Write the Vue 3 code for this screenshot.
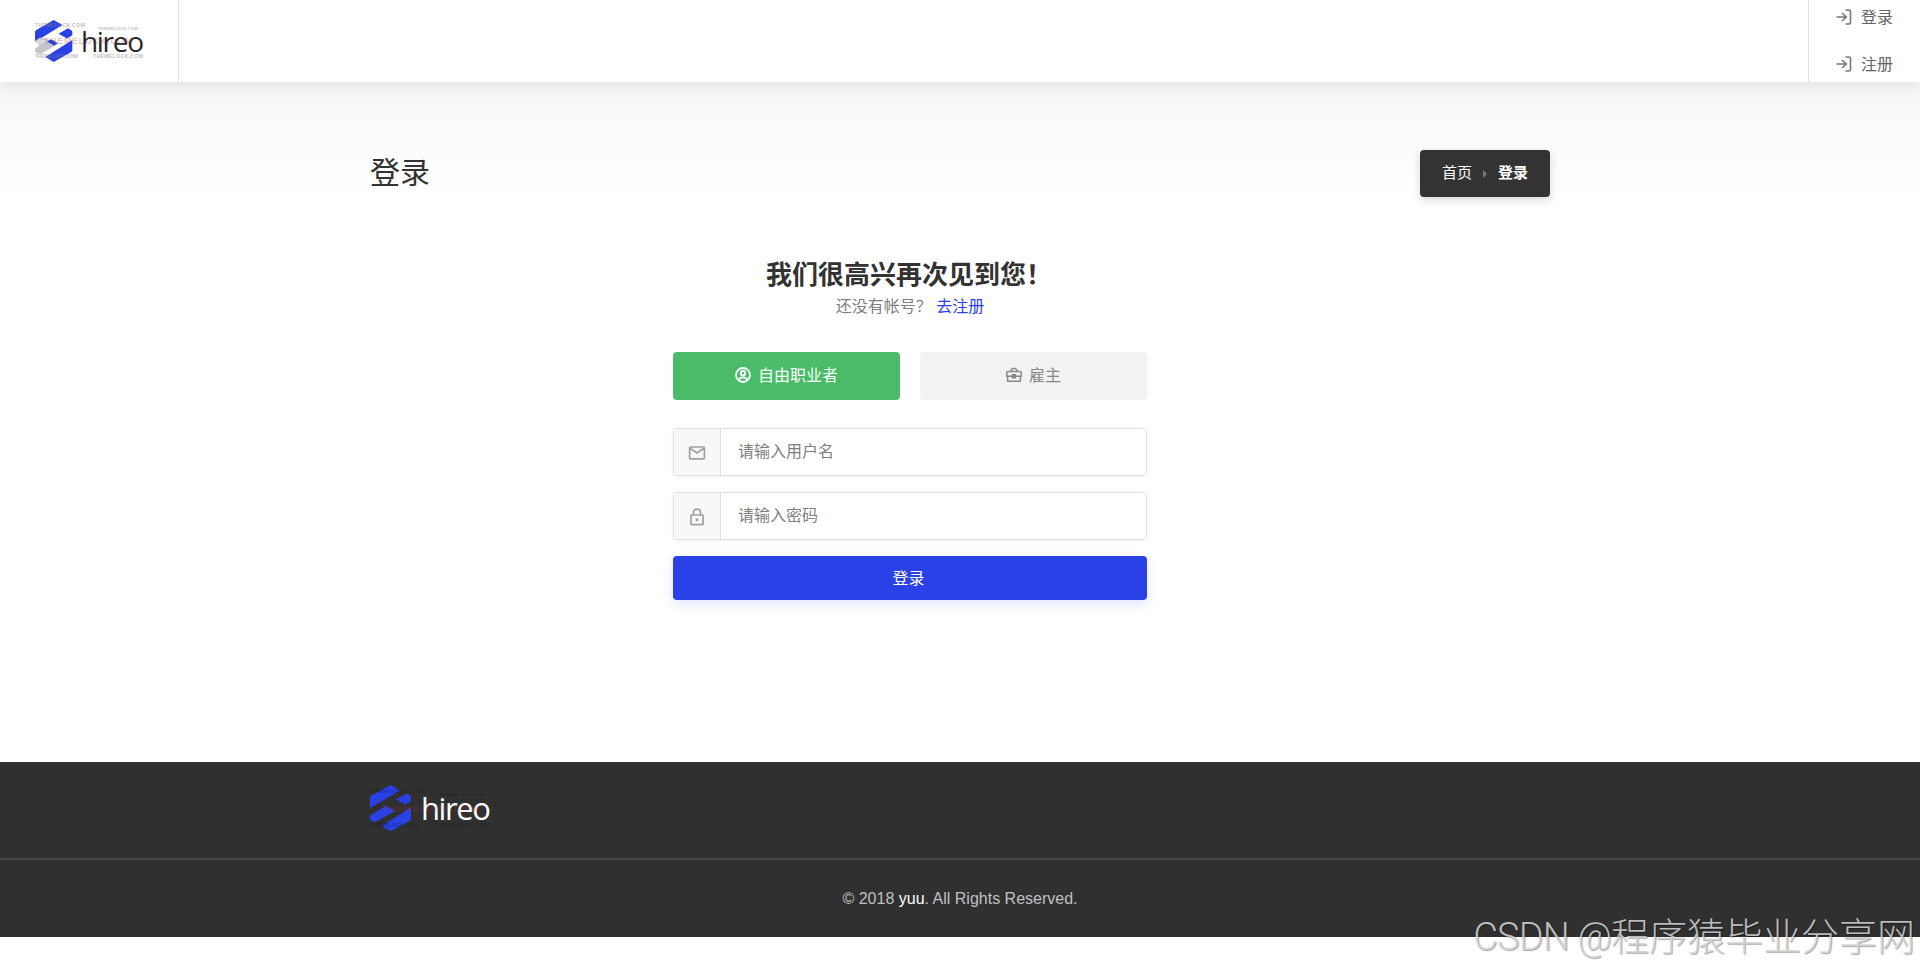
<template>
  <div class="page">
    <header class="header">
      <a class="header-logo" href="#">
        <svg class="logo-dark" viewBox="0 0 108 42">
          <g fill="#2a41e8">
            <path d="M18.7 0 27.3 5 0 22V12.2Q0 10.7 1.3 9.9Z" />
            <path d="M33 8.3 36.3 10.3Q37.3 11 37.3 12.3V15.2L32 18.5 23.5 13.7Z" />
            <path d="M37.3 20V30.2Q37.3 31.4 36.2 32L18.7 42 10.3 37Z" />
          </g>
          <path fill="#c5c5c9" d="M0 21 5 17.5 14 20 4 26ZM0 28.5 14 20 22.5 24.5 4.5 34.5 1.2 32.5Q0 31.8 0 30.5Z" />
          <path fill="#fff" d="M0 21.5 3.5 19.5 13 20.2 0 28Z" opacity="0.35" />
          <path fill="#2a41e8" d="M12 21.5 16 19.2 23 23.3 19 25.5Z" />
          <g class="mark">
            <text x="0" y="7" textLength="50">THEMELOCK.COM</text>
            <text x="63" y="10.3" textLength="40" class="mark-small">THEMELOCK.COM</text>
            <text x="0" y="37.5" textLength="43">THEMELOCK.COM</text>
            <text x="58" y="37.5" textLength="50">THEMELOCK.COM</text>
          </g>
          <text class="word" x="46" y="32" textLength="63">hireo</text>
          <text class="mark-red" x="9" y="24" textLength="88">THEMELOCK.COM</text>
        </svg>
      </a>
      <nav class="header-links">
        <a v-for="item in links" :key="item" href="#">
          <svg viewBox="0 0 16 16">
            <path d="M.5 8H10M6 4l4.3 4L6 12M9.5 1H13Q14.5 1 14.5 2.5V13.5Q14.5 15 13 15H9.5" />
          </svg>
          <span>{{ item }}</span>
        </a>
      </nav>
    </header>

    <section class="titlebar">
      <div class="container titlebar-inner">
        <h2>登录</h2>
        <nav class="breadcrumbs">
          <a href="#">首页</a>
          <i></i>
          <strong>登录</strong>
        </nav>
      </div>
    </section>

    <main class="login">
      <h3>我们很高兴再次见到您！</h3>
      <p class="hint">还没有帐号？ <a href="#">去注册</a></p>

      <div class="account-types">
        <button
          type="button"
          :class="{ active: accountType === 'freelancer' }"
          @click="accountType = 'freelancer'"
        >
          <svg viewBox="0 0 16 16">
            <circle cx="8" cy="8" r="7" />
            <circle cx="8" cy="6.2" r="2.2" />
            <path d="M3.6 13Q4.8 10.4 8 10.4T12.4 13" />
          </svg>
          <span>自由职业者</span>
        </button>
        <button
          type="button"
          :class="{ active: accountType === 'employer' }"
          @click="accountType = 'employer'"
        >
          <svg class="thin" viewBox="0 0 16 16">
            <path d="M2 4.6H14Q15.2 4.6 15.2 5.8V9.3H.8V5.8Q.8 4.6 2 4.6ZM1.6 9.3V14.2H14.4V9.3M5.2 4.4V3L6.5 1.5H9.5L10.8 3V4.4M6.5 7.8H9.5V10.8H6.5Z" />
          </svg>
          <span>雇主</span>
        </button>
      </div>

      <form @submit.prevent>
        <label class="field">
          <span class="field-icon">
            <svg viewBox="0 0 18 18">
              <path d="M2.4 3H15.6Q16.4 3 16.4 3.8V14Q16.4 14.8 15.6 14.8H2.4Q1.6 14.8 1.6 14V3.8Q1.6 3 2.4 3ZM2 4.2 9 9 16 4.2" />
            </svg>
          </span>
          <input v-model="username" type="text" placeholder="请输入用户名" />
        </label>
        <label class="field">
          <span class="field-icon">
            <svg viewBox="0 0 18 18">
              <path d="M3.6 7H14.4Q15 7 15 7.6V16Q15 16.6 14.4 16.6H3.6Q3 16.6 3 16V7.6Q3 7 3.6 7ZM5.5 7V4.5Q5.5 1.2 9 1.2T12.5 4.5V7" />
              <circle class="dot" cx="9" cy="11.8" r="1.5" />
            </svg>
          </span>
          <input v-model="password" type="password" placeholder="请输入密码" />
        </label>
        <button class="submit" type="submit">登录</button>
      </form>
    </main>

    <footer class="footer">
      <div class="footer-top">
        <div class="container">
          <svg class="logo-light" viewBox="0 0 120 47">
            <g fill="#2a41e8">
              <path d="M20.7 0 30 5.5 0 23V12.5Q0 11.3 1.2 10.7Z" />
              <path d="M36.7 8.5 39.8 10.3Q41 11 41 12.3V16L35.3 19.5 26 14.5Z" />
              <path d="M0 30.5 15.7 21 25 26 5 37.3 1.2 35.2Q0 34.5 0 33.2Z" />
              <path d="M41 22.5V33.5Q41 35 39.8 35.7L20.7 46.2 11.5 41Z" />
            </g>
            <g class="mark">
              <text x="0" y="7.5" textLength="55">THEMELOCK.COM</text>
              <text x="70" y="11" textLength="44" class="mark-small">THEMELOCK.COM</text>
              <text x="0" y="41.5" textLength="48">THEMELOCK.COM</text>
              <text x="64" y="41.5" textLength="55">THEMELOCK.COM</text>
            </g>
            <text class="word" x="51" y="35" textLength="70">hireo</text>
            <text class="mark-red" x="12" y="27" textLength="95">THEMELOCK.COM</text>
          </svg>
        </div>
      </div>
      <div class="footer-bottom">© 2018 <strong>yuu</strong>. All Rights Reserved.</div>
    </footer>

    <div class="watermark"><span>CSDN @</span>程序猿毕业分享网</div>
  </div>
</template>

<script setup>
import { ref } from 'vue';

const links = ['登录', '注册'];
const accountType = ref('freelancer');
const username = ref('');
const password = ref('');
</script>

<style>
body {
  margin: 0;
  background: #fff;
}
</style>

<style scoped>
.page {
  position: relative;
  height: 969px;
  overflow: hidden;
  display: flex;
  flex-direction: column;
  font-family: "Liberation Sans", "Noto Sans CJK SC", sans-serif;
  font-size: 16px;
  color: #707070;
}

a {
  text-decoration: none;
  color: inherit;
}

button,
input {
  font: inherit;
}

.container {
  width: 1180px;
  margin: 0 auto;
}

.header {
  position: relative;
  z-index: 2;
  flex: none;
  height: 82px;
  display: flex;
  justify-content: space-between;
  background: #fff;
  box-shadow: 0 4px 18px rgba(0, 0, 0, 0.1);
}

.header-logo {
  box-sizing: border-box;
  width: 179px;
  padding: 20px 0 0 35px;
  border-right: 1px solid #e0e0e0;
}

.logo-dark {
  display: block;
  width: 108px;
  height: 42px;
  overflow: visible;
}

.word {
  font-family: "Open Sans", sans-serif;
  font-size: 28px;
  fill: #262626;
}

.mark text {
  font-size: 5.4px;
  font-weight: 700;
  fill: rgba(130, 130, 130, 0.5);
}

.mark .mark-small {
  font-size: 4.4px;
}

.mark-red {
  font-size: 8.5px;
  font-weight: 700;
  fill: rgba(150, 80, 80, 0.34);
}

.header-links {
  box-sizing: border-box;
  width: 112px;
  padding-left: 27px;
  border-left: 1px solid #e0e0e0;
}

.header-links a {
  display: flex;
  align-items: center;
  gap: 9px;
  height: 24px;
  margin: 5px 0 23px;
  color: #666;
}

.header-links span {
  padding-bottom: 2px;
}

.header-links svg {
  width: 16px;
  height: 16px;
  fill: none;
  stroke: #777;
  stroke-width: 1.6;
}

.titlebar {
  flex: none;
  height: 118px;
  background: linear-gradient(#f8f8f8, #fff);
}

.titlebar-inner {
  display: flex;
  justify-content: space-between;
  align-items: flex-start;
  padding-top: 68px;
}

.titlebar h2 {
  margin: 0;
  font-size: 30px;
  font-weight: 400;
  line-height: 46px;
  color: #333;
}

.breadcrumbs {
  box-sizing: border-box;
  width: 130px;
  height: 47px;
  padding: 0 22px 4px;
  display: flex;
  align-items: center;
  font-size: 15px;
  color: #fff;
  background: #333;
  border-radius: 4px;
  box-shadow: 0 3px 10px rgba(0, 0, 0, 0.16);
}

.breadcrumbs i {
  margin: 4px 11px 0;
  border-left: 4px solid #777;
  border-top: 4px solid transparent;
  border-bottom: 4px solid transparent;
}

.login {
  flex: none;
  width: 474px;
  height: 506px;
  margin-left: 673px;
  margin-top: 56px;
  text-align: center;
}

.login h3 {
  margin: 0 2px 0 0;
  font-size: 26px;
  line-height: 38px;
  color: #333;
}

.hint {
  margin: 0 0 32px;
  line-height: 26px;
  color: #808080;
}

.hint a {
  color: #2a41e8;
}

.account-types {
  display: flex;
  gap: 20px;
}

.account-types button {
  flex: 1;
  height: 48px;
  padding: 0 0 2px;
  display: flex;
  align-items: center;
  justify-content: center;
  gap: 7px;
  color: #888;
  background: #f2f2f2;
  border: none;
  border-radius: 4px;
  cursor: pointer;
}

.account-types .active {
  color: #fff;
  background: #49bb69;
}

.account-types span {
  padding-bottom: 2px;
}

.account-types svg {
  width: 16px;
  height: 16px;
  fill: none;
  stroke: currentColor;
  stroke-width: 1.8;
}

.account-types .thin {
  stroke-width: 1.5;
}

form {
  display: flex;
  flex-direction: column;
  gap: 16px;
  margin-top: 28px;
}

.field {
  box-sizing: border-box;
  height: 48px;
  display: flex;
  border: 1px solid #e0e0e0;
  border-radius: 4px;
  box-shadow: 0 1px 4px rgba(0, 0, 0, 0.05);
  overflow: hidden;
}

.field-icon {
  width: 46px;
  padding-top: 2px;
  display: flex;
  align-items: center;
  justify-content: center;
  background: #f8f8f8;
  border-right: 1px solid #e0e0e0;
}

.field-icon svg {
  width: 18px;
  height: 18px;
  fill: none;
  stroke: #a0a0a0;
  stroke-width: 1.7;
}

.field-icon .dot {
  fill: #a0a0a0;
  stroke: none;
}

.field input {
  flex: 1;
  min-width: 0;
  padding: 0 17px 1px;
  border: none;
  outline: none;
  color: #808080;
  background: #fff;
}

.field input::placeholder {
  color: #808080;
  opacity: 1;
}

.submit {
  height: 44px;
  padding: 0 3px 3px 0;
  color: #fff;
  background: #2a41e8;
  border: none;
  border-radius: 4px;
  box-shadow: 0 4px 12px rgba(42, 65, 232, 0.15);
  cursor: pointer;
}

.footer {
  flex: none;
  height: 175px;
  background: #303030;
}

.footer-top {
  box-sizing: border-box;
  height: 98px;
  padding-top: 23px;
  border-bottom: 2px solid #484848;
}

.logo-light {
  display: block;
  width: 120px;
  height: 47px;
  overflow: visible;
}

.logo-light .word {
  font-size: 31px;
  fill: #fff;
}

.logo-light .mark text {
  fill: rgba(0, 0, 0, 0.28);
}

.logo-light .mark-red {
  fill: rgba(210, 50, 60, 0.24);
}

.footer-bottom {
  padding-top: 27px;
  line-height: 24px;
  text-align: center;
  color: #c0c0c0;
}

.footer-bottom strong {
  font-weight: 400;
  color: #fff;
}

.watermark {
  position: absolute;
  right: 5px;
  bottom: 4px;
  font-family: "Noto Sans CJK SC", sans-serif;
  font-size: 38px;
  font-weight: 300;
  line-height: 56px;
  white-space: nowrap;
  color: rgba(215, 215, 215, 0.85);
  text-shadow: 1px 1px 1px rgba(0, 0, 0, 0.35);
}

.watermark span {
  font-family: Roboto, sans-serif;
  letter-spacing: -0.9px;
}
</style>
